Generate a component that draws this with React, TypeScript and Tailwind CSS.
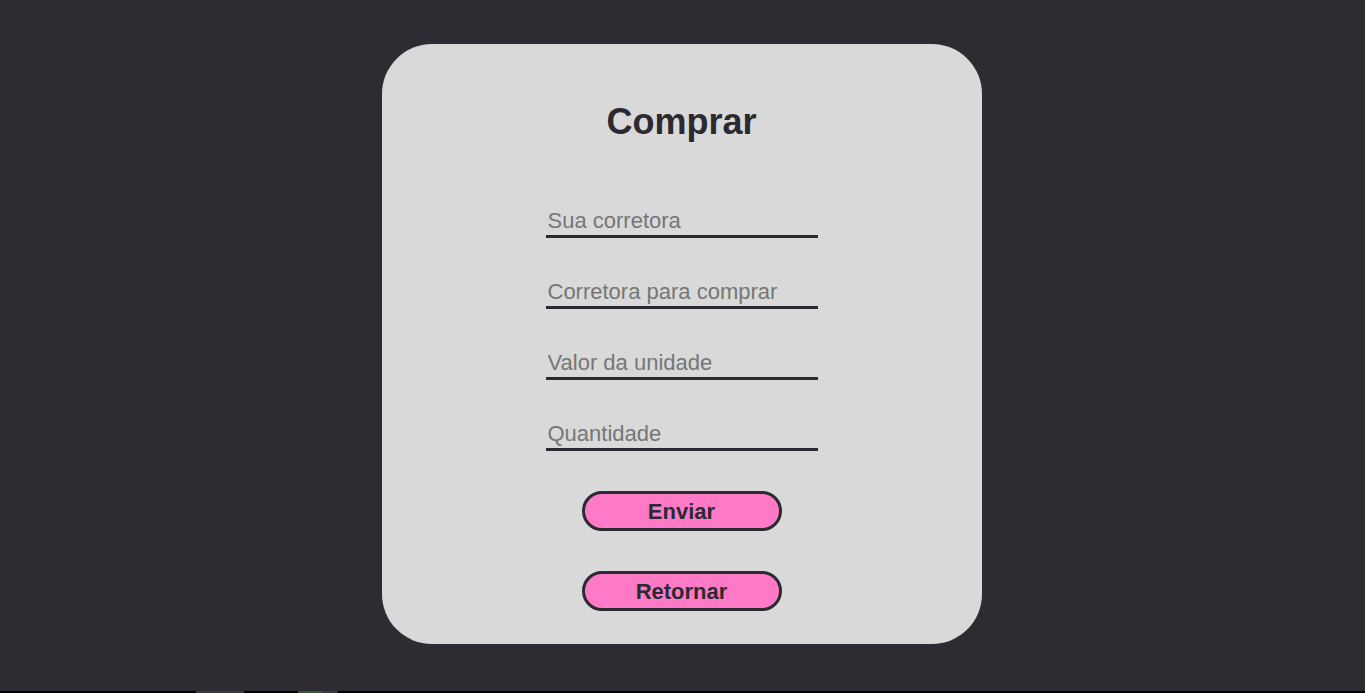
import React, { useState, type ChangeEvent, type FormEvent } from "react";

type FormDataType = {
  corretora: string;
  corretoraCompra: string;
  valor: string;
  quantidade: string;
};

const fields: { name: keyof FormDataType; placeholder: string }[] = [
  { name: "corretora", placeholder: "Sua corretora" },
  { name: "corretoraCompra", placeholder: "Corretora para comprar" },
  { name: "valor", placeholder: "Valor da unidade" },
  { name: "quantidade", placeholder: "Quantidade" },
];

const App = () => {
  const [formData, setFormData] = useState<FormDataType>({
    corretora: "",
    corretoraCompra: "",
    valor: "",
    quantidade: "",
  });

  const handleChange = (e: ChangeEvent<HTMLInputElement>) => {
    const { name, value } = e.target;
    setFormData({ ...formData, [name]: value });
  };

  const handleSubmit = (e: FormEvent<HTMLFormElement>) => {
    e.preventDefault();
  };

  return (
    <div className="bg-[#2e2b32] font-['Liberation_Sans',Arial,sans-serif]">
      <main className="h-[691px] flex justify-center pt-[44px] pr-[2px]">
        <div className="w-[600px] h-[600px] bg-[#d9d9d9] rounded-[50px] flex flex-col items-center pt-[57px]">
          <h1 className="text-[36px] leading-[41px] font-bold text-[#2b2a30]">
            Comprar
          </h1>

          <form
            onSubmit={handleSubmit}
            className="flex flex-col items-center mt-[64px]"
          >
            <div className="flex flex-col gap-[39px]">
              {fields.map((f) => (
                <input
                  key={f.name}
                  type="text"
                  name={f.name}
                  value={formData[f.name]}
                  onChange={handleChange}
                  placeholder={f.placeholder}
                  className="w-[272px] h-[32px] pl-[2px] pr-[1px] bg-transparent border-b-[3px] border-[#2b2a30] text-[22px] text-[#2b2a30] placeholder:text-[#767676] outline-none"
                />
              ))}
            </div>

            <button
              type="submit"
              className="mt-[40px] w-[200px] h-[40px] rounded-full border-[3px] border-[#2b2a30] bg-[#ff7ac6] text-[22px] font-bold text-[#2b2a30] cursor-pointer"
            >
              Enviar
            </button>
            <button
              type="button"
              className="mt-[40px] w-[200px] h-[40px] rounded-full border-[3px] border-[#2b2a30] bg-[#ff7ac6] text-[22px] font-bold text-[#2b2a30] cursor-pointer"
            >
              Retornar
            </button>
          </form>
        </div>
      </main>
      <div className="h-[2px] bg-black flex">
        <div className="ml-[196px] w-[48px] bg-[#3a3a3c]" />
        <div className="ml-[54px] w-[24px] bg-[#2f5d2a]" />
        <div className="w-[16px] bg-[#3a3a3c]" />
      </div>
    </div>
  );
};

export default App;
